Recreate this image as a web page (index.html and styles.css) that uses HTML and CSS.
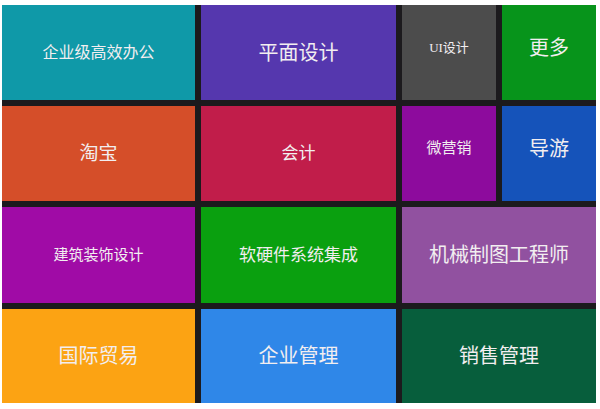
FILE: index.html
```html
<!DOCTYPE html>
<html lang="zh-CN">
<head>
<meta charset="utf-8">
<title>课程分类</title>
<link rel="stylesheet" href="styles.css">
</head>
<body>
<div class="metro">
  <div class="tile t-teal s16">企业级高效办公</div>
  <div class="tile t-indigo s20">平面设计</div>
  <div class="tile t-grey s13 up">UI设计</div>
  <div class="tile t-green s20 up">更多</div>

  <div class="tile t-orange s19">淘宝</div>
  <div class="tile t-crimson s17">会计</div>
  <div class="tile t-violet s15 up">微营销</div>
  <div class="tile t-blue s20 up">导游</div>

  <div class="tile t-magenta s15">建筑装饰设计</div>
  <div class="tile t-lime s17">软硬件系统集成</div>
  <div class="tile t-plum s20 wide">机械制图工程师</div>

  <div class="tile t-amber s20">国际贸易</div>
  <div class="tile t-sky s20">企业管理</div>
  <div class="tile t-forest s20 wide">销售管理</div>
</div>
</body>
</html>
```

FILE: styles.css
```css
html, body {
  margin: 0;
  padding: 0;
  background: #ffffff;
}

body {
  padding: 5px 0 0 2px;
  font-family: "Liberation Serif", "Noto Sans CJK SC", serif;
}

.metro {
  display: grid;
  grid-template-columns: 193px 195px 94px 94px;
  grid-template-rows: 95px 95px 96px 94px;
  gap: 6px;
  width: 594px;
  background: #1c1a1d;
}

.tile {
  display: flex;
  align-items: center;
  justify-content: center;
  color: #f2eef0;
  line-height: 1;
  white-space: nowrap;
}

.wide { grid-column: span 2; }
.up { padding-bottom: 10px; box-sizing: border-box; }

.s13 { font-size: 13px; }
.s15 { font-size: 15px; }
.s16 { font-size: 16px; }
.s17 { font-size: 17px; }
.s19 { font-size: 19px; }
.s20 { font-size: 20px; }

.t-teal    { background: #0f99a8; }
.t-indigo  { background: #5537ae; }
.t-grey    { background: #4c4c4c; }
.t-green   { background: #07941b; }
.t-orange  { background: #d54e29; }
.t-crimson { background: #c11d4a; }
.t-violet  { background: #8d0b9d; }
.t-blue    { background: #1553ba; }
.t-magenta { background: #a00ba6; }
.t-lime    { background: #0aa00f; }
.t-plum    { background: #9151a0; }
.t-amber   { background: #fca313; }
.t-sky     { background: #2f87e8; }
.t-forest  { background: #075e3c; }
```
